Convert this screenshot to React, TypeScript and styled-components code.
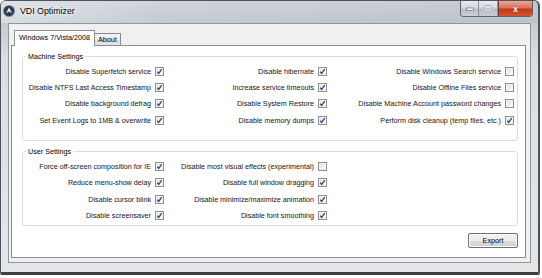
import React from 'react';
import styled, { createGlobalStyle } from 'styled-components';

type Option = { label: string; checked: boolean };

const machineColumns: Option[][] = [
	[
		{ label: 'Disable Superfetch service', checked: true },
		{ label: 'Disable NTFS Last Access Timestamp', checked: true },
		{ label: 'Disable background defrag', checked: true },
		{ label: 'Set Event Logs to 1MB & overwrite', checked: true }
	],
	[
		{ label: 'Disable hibernate', checked: true },
		{ label: 'Increase service timeouts', checked: true },
		{ label: 'Disable System Restore', checked: true },
		{ label: 'Disable memory dumps', checked: true }
	],
	[
		{ label: 'Disable Windows Search service', checked: false },
		{ label: 'Disable Offline Files service', checked: false },
		{ label: 'Disable Machine Account password changes', checked: false },
		{ label: 'Perform disk cleanup (temp files, etc.)', checked: true }
	]
];

const userColumns: Option[][] = [
	[
		{ label: 'Force off-screen composition for IE', checked: true },
		{ label: 'Reduce menu-show delay', checked: true },
		{ label: 'Disable cursor blink', checked: true },
		{ label: 'Disable screensaver', checked: true }
	],
	[
		{ label: 'Disable most visual effects (experimental)', checked: false },
		{ label: 'Disable full window dragging', checked: true },
		{ label: 'Disable minimize/maximize animation', checked: true },
		{ label: 'Disable font smoothing', checked: true }
	]
];

const GlobalStyle = createGlobalStyle`
	html, body {
		margin: 0;
		padding: 0;
		background: #ffffff;
	}
	body {
		font-family: "Liberation Sans", Arial, sans-serif;
		color: #141414;
	}
`;

const Window = styled.div`
	width: 540px;
	height: 275px;
	box-sizing: border-box;
	border: 1px solid #4e5359;
	border-right-width: 2px;
	border-bottom-width: 3px;
	border-bottom-color: #3c3f43;
	border-radius: 6px 6px 2px 2px;
	background: linear-gradient(to bottom, #cfd5da 0px, #c4cbd1 22px, #dcdfe2 60px, #e4e6e8 100%);
	display: flex;
	flex-direction: column;
	padding: 0 7px 9px 7px;
`;

const TitleBar = styled.div`
	height: 22px;
	margin: 0 -7px;
	padding: 0 5px 0 2px;
	display: flex;
	align-items: flex-start;
	background: linear-gradient(to right, rgba(255, 255, 255, 0.35) 0px, rgba(255, 255, 255, 0) 160px, rgba(120, 128, 136, 0.12) 100%);
`;

const AppIcon = styled.svg`
	width: 12px;
	height: 12px;
	margin-top: 4px;
	flex: none;
`;

const Title = styled.span`
	margin: 4px 0 0 5px;
	font-size: 8.8px;
	line-height: 12px;
	color: #000;
	text-shadow: 0 0 6px #ffffff, 0 0 3px #ffffff;
	flex: 1;
`;

const Caption = styled.div`
	display: flex;
	height: 15px;
	border: 1px solid #5d636b;
	border-top: none;
	border-radius: 0 0 4px 4px;
	overflow: hidden;
`;

const CaptionButton = styled.div<{ $w: number; $close?: boolean }>`
	width: ${(p) => p.$w}px;
	display: flex;
	align-items: center;
	justify-content: center;
	border-left: ${(p) => (p.$close ? '1px solid #7a3a2e' : 'none')};
	border-right: ${(p) => (p.$close ? 'none' : '1px solid #8c9198')};
	background: ${(p) =>
		p.$close
			? 'linear-gradient(to bottom, #e9a99a 0%, #d9735c 45%, #c23a1e 55%, #d7542f 100%)'
			: 'linear-gradient(to bottom, #e9ecef 0%, #d3d8dd 45%, #b7bec6 55%, #c9cfd5 100%)'};
	color: #ffffff;
	font-size: 9px;
	font-weight: bold;
	text-shadow: 0 0 2px #6b1d0e;
`;

const Client = styled.div`
	flex: 1;
	box-sizing: border-box;
	background: #f0f0f0;
	border: 1px solid #8f969d;
	display: flex;
	flex-direction: column;
	padding: 6px 4px 4px 2px;
`;

const TabStrip = styled.div`
	display: flex;
	align-items: flex-end;
	padding-left: 3px;
	margin-bottom: -1px;
	position: relative;
	z-index: 1;
`;

const Tab = styled.div<{ $active?: boolean }>`
	box-sizing: border-box;
	height: ${(p) => (p.$active ? 16 : 12)}px;
	margin-bottom: ${(p) => (p.$active ? 0 : 1)}px;
	padding: ${(p) => (p.$active ? '2px 4px 0 4px' : '1px 3px 0 3px')};
	border: 1px solid #898c95;
	border-bottom: none;
	border-left: ${(p) => (p.$active ? '1px solid #898c95' : 'none')};
	background: ${(p) => (p.$active ? '#ffffff' : 'linear-gradient(to bottom, #f3f3f3 0%, #ebebeb 50%, #dcdcdc 51%, #e4e4e4 100%)')};
	font-size: 7.2px;
	line-height: 10px;
	color: #000;
	white-space: nowrap;
`;

const Panel = styled.div`
	flex: 1;
	background: #ffffff;
	border: 1px solid #898c95;
	display: flex;
	flex-direction: column;
	padding: 6px 7px 0 10px;
`;

const Group = styled.fieldset<{ $bottom: number }>`
	margin: 0;
	padding: 2px 0 ${(p) => p.$bottom}px 0;
	min-width: 0;
	border: 1px solid #d5dfe5;
	border-radius: 3px;
	& + & {
		margin-top: 6px;
	}
`;

const Legend = styled.legend`
	margin-left: 3px;
	padding: 0 2px;
	font-size: 7.2px;
	line-height: 9px;
	color: #000;
`;

const Columns = styled.div`
	display: grid;
	grid-template-columns: 141px 163px 187px;
`;

const Column = styled.div`
	display: flex;
	flex-direction: column;
	align-items: flex-end;
`;

const Row = styled.label`
	height: 16.33px;
	display: flex;
	align-items: center;
	justify-content: flex-end;
	gap: 4px;
	font-size: 7.2px;
	white-space: nowrap;
`;

const Box = styled.span`
	box-sizing: border-box;
	width: 9px;
	height: 9px;
	flex: none;
	border: 1px solid #8e8f8f;
	background: linear-gradient(135deg, #dcdcdc 0%, #f6f6f6 70%, #ffffff 100%);
	box-shadow: inset 0 0 0 1px #f4f4f4;
	display: flex;
	align-items: center;
	justify-content: center;
`;

const ButtonRow = styled.div`
	display: flex;
	justify-content: flex-end;
	margin-top: 7px;
`;

const Button = styled.button`
	width: 50px;
	height: 15px;
	padding: 0;
	border: 1px solid #707070;
	border-radius: 2px;
	background: linear-gradient(to bottom, #f2f2f2 0%, #ebebeb 50%, #dddddd 51%, #cfcfcf 100%);
	box-shadow: inset 0 0 0 1px #fafafa;
	font-family: "Liberation Sans", Arial, sans-serif;
	font-size: 7.2px;
	color: #000;
`;

function Checkbox({ checked }: { checked: boolean }) {
	return (
		<Box>
			{checked && (
				<svg width='7' height='7' viewBox='0 0 7 7'>
					<path d='M1.2 3.8 L2.7 5.5 L5.8 1.2' fill='none' stroke='#34487a' strokeWidth='1.3' />
				</svg>
			)}
		</Box>
	);
}

function OptionGroup({ title, columns, bottom }: { title: string; columns: Option[][]; bottom: number }) {
	return (
		<Group $bottom={bottom}>
			<Legend>{title}</Legend>
			<Columns>
				{columns.map((col, i) => (
					<Column key={i}>
						{col.map((opt) => (
							<Row key={opt.label}>
								{opt.label}
								<Checkbox checked={opt.checked} />
							</Row>
						))}
					</Column>
				))}
			</Columns>
		</Group>
	);
}

export default function App() {
	return (
		<>
			<GlobalStyle />
			<Window>
				<TitleBar>
					<AppIcon viewBox='0 0 12 12'>
						<circle cx='6' cy='6' r='5.6' fill='#2f3b4c' stroke='#8593a5' strokeWidth='0.8' />
						<path d='M6 2.4 L9 8.2 L6 6.6 L3 8.2 Z' fill='#e8eef5' />
					</AppIcon>
					<Title>VDI Optimizer</Title>
					<Caption>
						<CaptionButton $w={17}>
							<svg width='8' height='4' viewBox='0 0 8 4'>
								<rect x='0.5' y='1' width='7' height='2.2' fill='#ffffff' stroke='#4c5560' strokeWidth='0.6' />
							</svg>
						</CaptionButton>
						<CaptionButton $w={18}>
							<svg width='8' height='7' viewBox='0 0 8 7'>
								<rect x='0.8' y='0.8' width='6.4' height='5.4' fill='none' stroke='#ffffff' strokeWidth='1.6' />
								<rect x='0.8' y='0.8' width='6.4' height='5.4' fill='none' stroke='#4c5560' strokeWidth='0.5' />
							</svg>
						</CaptionButton>
						<CaptionButton $w={33} $close>
							x
						</CaptionButton>
					</Caption>
				</TitleBar>
				<Client>
					<TabStrip>
						<Tab $active>Windows 7/Vista/2008</Tab>
						<Tab>About</Tab>
					</TabStrip>
					<Panel>
						<OptionGroup title='Machine Settings' columns={machineColumns} bottom={12} />
						<OptionGroup title='User Settings' columns={userColumns} bottom={1} />
						<ButtonRow>
							<Button>Export</Button>
						</ButtonRow>
					</Panel>
				</Client>
			</Window>
		</>
	);
}
